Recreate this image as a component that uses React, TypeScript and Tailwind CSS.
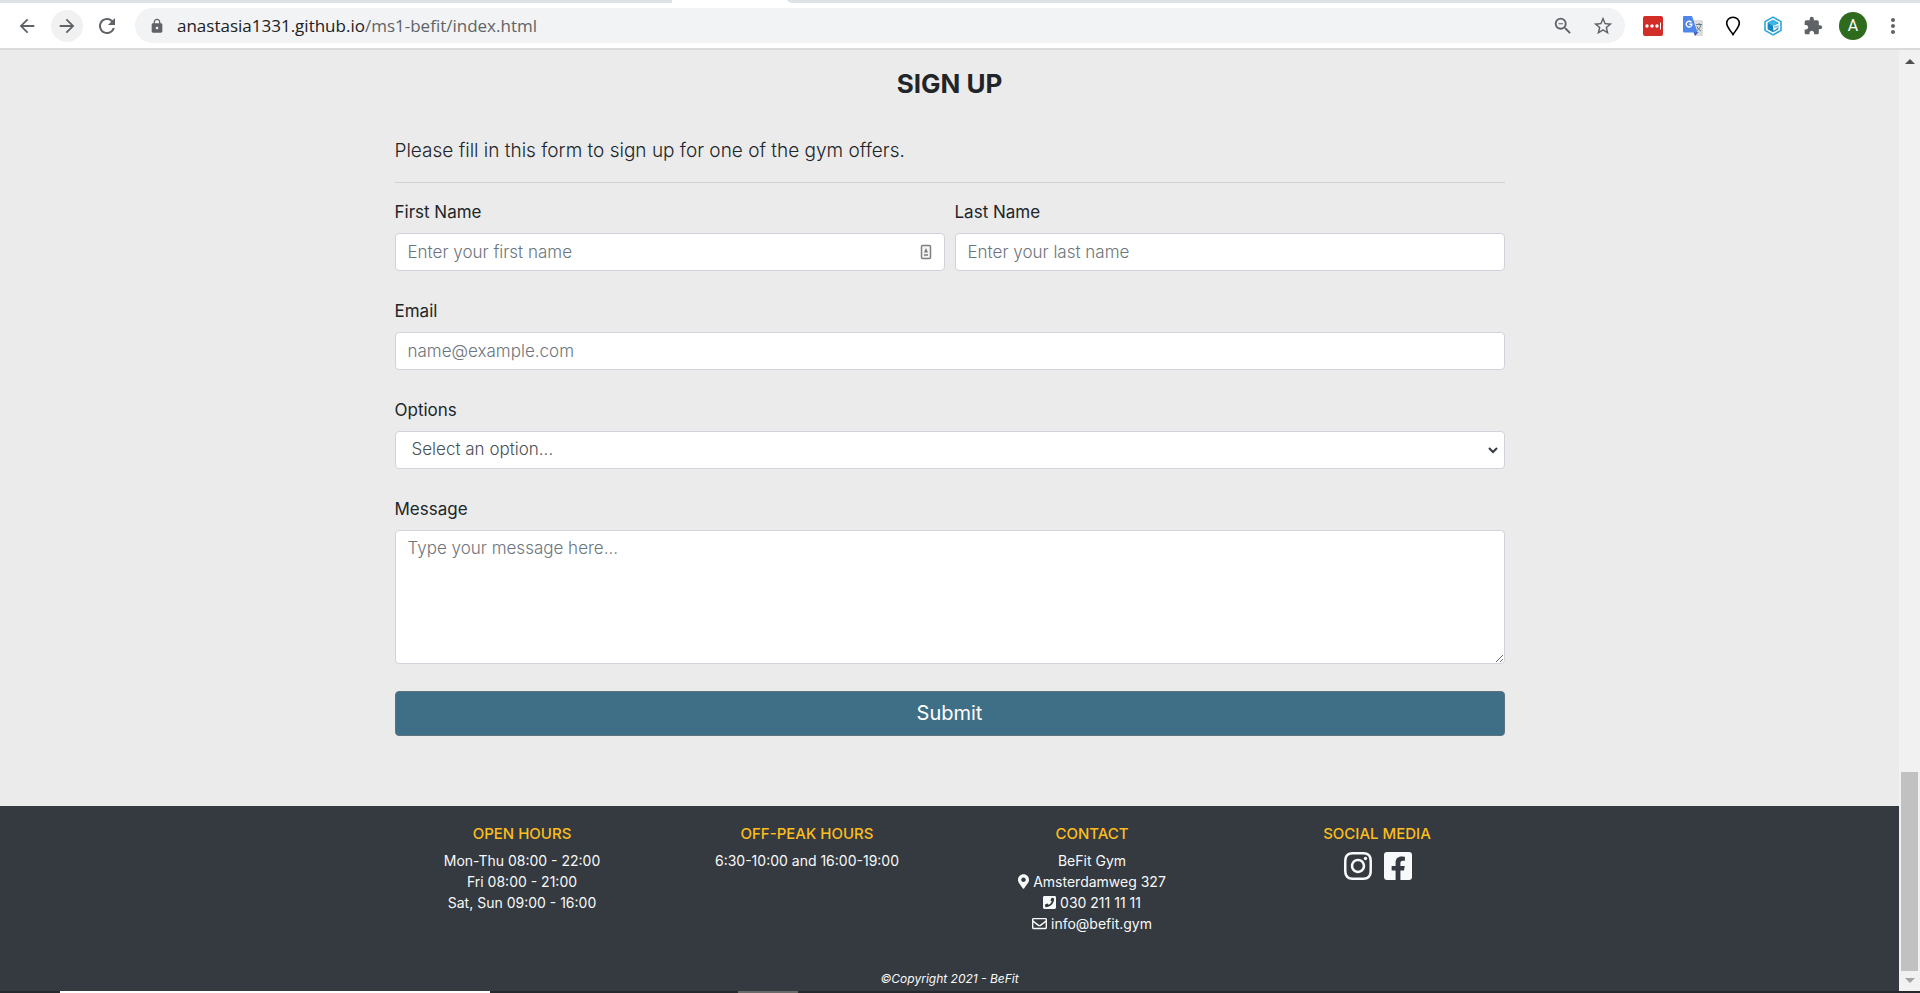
import type { ReactNode } from "react";
import {
  MdArrowBack,
  MdArrowForward,
  MdExtension,
  MdLock,
  MdMoreVert,
  MdRefresh,
  MdStarBorder,
  MdZoomOut,
} from "react-icons/md";
import {
  FaFacebookSquare,
  FaInstagram,
  FaMapMarkerAlt,
  FaPhoneSquare,
  FaRegEnvelope,
} from "react-icons/fa";

const control =
  "block h-[38px] w-full rounded border border-[#ced4da] bg-white px-3 text-[17px] font-light placeholder:text-[#6c757d] outline-none";

function TabStrip() {
  return (
    <div className="flex h-[3px] bg-[#dee1e6]">
      <div className="w-[35%]" />
      <svg className="h-[3px] w-[120px]" viewBox="0 0 120 3" aria-hidden="true">
        <path d="M-4 3 Q-1 3 0 0 H115 Q117 3 120 3 Z" fill="#fff" />
      </svg>
    </div>
  );
}

function PasswordIcon() {
  return (
    <svg className="size-5" viewBox="0 0 20 20" aria-hidden="true">
      <rect width="20" height="20" rx="2" fill="#d32d27" />
      <circle cx="4" cy="10" r="1.7" fill="#fff" />
      <circle cx="9" cy="10" r="1.7" fill="#fff" />
      <circle cx="14" cy="10" r="1.7" fill="#fff" />
      <rect x="17" y="6.5" width="1" height="7" fill="#fff" />
    </svg>
  );
}

function TranslateIcon() {
  return (
    <svg className="size-5" viewBox="0 0 20 20" aria-hidden="true">
      <path d="M8 4h11a1 1 0 0 1 1 1v14a1 1 0 0 1-1 1h-7z" fill="#dcdcdc" />
      <path d="M10.5 16h5L12 20z" fill="#3a57b5" />
      <path d="M1 0h8l5.500 16.500H1a1 1 0 0 1-1-1V1a1 1 0 0 1 1-1z" fill="#4f86ec" />
      <path d="M8.400 6.300a2.900 2.900 0 1 0 .6 2H6.300" fill="none" stroke="#fff" strokeWidth="1.400" />
      <path
        d="M13 8.500h6M16 7v1.500M18 8.500c-.5 3-2.500 5-4 6M14 10.500c.8 2 2.200 3.500 4 4.500"
        fill="none"
        stroke="#607d8b"
        strokeWidth="1"
      />
    </svg>
  );
}

function PinIcon() {
  return (
    <svg className="size-5" viewBox="0 0 20 20" aria-hidden="true">
      <path
        d="M10 1.200C6.200 1.200 3.700 4 3.700 7.200c0 3.600 3.700 7.300 6.300 11.300 2.600-4 6.300-7.700 6.300-11.300 0-3.200-2.500-6-6.300-6z"
        fill="none"
        stroke="#000"
        strokeWidth="1.600"
      />
    </svg>
  );
}

function HexagonIcon() {
  return (
    <svg className="size-5" viewBox="0 0 20 20" aria-hidden="true">
      <path d="M10 1.100l8 4.500v8.800l-8 4.500-8-4.500V5.600z" fill="#fff" stroke="#2ba3dc" strokeWidth="1.600" />
      <path d="M10 3.800l5.400 3v6.400l-5.400 3-5.400-3V6.800z" fill="#1287c4" />
      <path d="M10 3.800l5.400 3L10 10 4.600 6.800z" fill="#3fb4e8" />
      <path d="M15.800 8L10.500 10.200v0M15.600 10H10.600v2.200l3-.2-3.300 2.200" fill="none" stroke="#fff" strokeWidth="1.200" />
    </svg>
  );
}

function IconButton({ label, className = "", children }: { label: string; className?: string; children: ReactNode }) {
  return (
    <button
      type="button"
      aria-label={label}
      className={`flex size-8 shrink-0 items-center justify-center rounded-full text-[#5f6368] ${className}`}
    >
      {children}
    </button>
  );
}

function Toolbar() {
  return (
    <header className="border-b-2 border-[#d9dbdb] bg-white">
      <TabStrip />
      <div className="flex h-[45px] items-center pr-[11px] pl-[11px]">
        <div className="flex gap-2">
          <IconButton label="Back">
            <MdArrowBack size={22} />
          </IconButton>
          <IconButton label="Forward" className="bg-[#f1f1f1]">
            <MdArrowForward size={22} />
          </IconButton>
          <IconButton label="Reload">
            <MdRefresh size={24} />
          </IconButton>
        </div>
        <div className="ml-3 flex h-[35px] flex-1 items-center rounded-full bg-[#f1f3f4] pr-[6px] pl-[14px]">
          <MdLock className="text-[#5f6368]" size={16} />
          <p className="ml-3 flex-1 font-['Open_Sans',sans-serif] text-[17px] text-[#5f6368]">
            <span className="text-[#202124]">anastasia1331.github.io</span>/ms1-befit/index.html
          </p>
          <div className="flex gap-2">
            <IconButton label="Zoom">
              <MdZoomOut size={22} />
            </IconButton>
            <IconButton label="Bookmark this page">
              <MdStarBorder size={22} />
            </IconButton>
          </div>
        </div>
        <div className="ml-3 flex items-center gap-2">
          <IconButton label="Password manager">
            <PasswordIcon />
          </IconButton>
          <IconButton label="Translate">
            <TranslateIcon />
          </IconButton>
          <IconButton label="Location">
            <PinIcon />
          </IconButton>
          <IconButton label="Cube">
            <HexagonIcon />
          </IconButton>
          <IconButton label="Extensions">
            <MdExtension size={20} />
          </IconButton>
          <IconButton label="Profile">
            <span className="flex size-7 items-center justify-center rounded-full bg-[#2f6b1c] font-['Roboto',sans-serif] text-base text-white">
              A
            </span>
          </IconButton>
          <IconButton label="Menu">
            <MdMoreVert size={24} />
          </IconButton>
        </div>
      </div>
    </header>
  );
}

function Field({ id, label, children }: { id: string; label: string; children: ReactNode }) {
  return (
    <div className="flex-1">
      <label htmlFor={id} className="mb-[10px] block text-[17px] leading-[22px]">
        {label}
      </label>
      {children}
    </div>
  );
}

function SignUp() {
  return (
    <main className="flex-1 bg-[#ebebeb] pt-4 pb-[70px]">
      <div className="mx-auto max-w-[1140px] px-[15px]">
        <h2 className="text-center text-[26px] leading-9 font-bold">SIGN UP</h2>
        <form>
          <p className="mt-[34px] border-b border-[#d0d0d0] pb-4 text-[19px] leading-[30px] font-light">
            Please fill in this form to sign up for one of the gym offers.
          </p>
          <div className="mt-[18px] flex flex-col gap-[29px]">
            <div className="flex gap-[10px]">
              <Field id="first-name" label="First Name">
                <div className="relative">
                  <input id="first-name" type="text" placeholder="Enter your first name" className={control} />
                  <svg className="absolute top-[11px] right-[13px] h-4 w-3" viewBox="0 0 12 16" aria-hidden="true">
                    <rect x="1.500" y="1.500" width="9" height="13" rx="1" fill="#f5f5f5" stroke="#808080" strokeWidth="1.500" />
                    <path d="M6 4l2 4.500H4z" fill="#777" />
                    <path d="M4 10h4v2H4z" fill="#999" />
                  </svg>
                </div>
              </Field>
              <Field id="last-name" label="Last Name">
                <input id="last-name" type="text" placeholder="Enter your last name" className={control} />
              </Field>
            </div>
            <Field id="email" label="Email">
              <input id="email" type="email" placeholder="name@example.com" className={control} />
            </Field>
            <Field id="options" label="Options">
              <div className="relative">
                <select
                  id="options"
                  className="block h-[38px] w-full appearance-none rounded border border-[#ced4da] bg-white px-4 text-[17px] font-light text-[#495057] outline-none"
                >
                  <option>Select an option...</option>
                </select>
                <svg
                  className="pointer-events-none absolute top-4 right-[7px] h-[7px] w-[10px]"
                  viewBox="0 0 10 7"
                  aria-hidden="true"
                >
                  <path d="M1 1l4 4 4-4" fill="none" stroke="#343a40" strokeWidth="2" />
                </svg>
              </div>
            </Field>
            <Field id="message" label="Message">
              <textarea
                id="message"
                placeholder="Type your message here..."
                className="block h-[134px] w-full rounded border border-[#ced4da] bg-white px-3 py-[6px] text-[17px] leading-[22px] font-light outline-none placeholder:text-[#6c757d]"
              />
            </Field>
          </div>
          <button
            type="submit"
            className="mt-[27px] h-[45px] w-full rounded border border-[#5d7480] bg-[#3f6f86] pb-[2px] text-[20px] text-white"
          >
            Submit
          </button>
        </form>
      </div>
    </main>
  );
}

function FooterColumn({ title, children }: { title: string; children: ReactNode }) {
  return (
    <section className="text-center text-[14px] leading-[21px]">
      <h3 className="mb-1 text-[15px] leading-6 font-medium text-[#fcbe1e]">{title}</h3>
      {children}
    </section>
  );
}

function Footer() {
  return (
    <footer className="bg-[#343a40] pt-4 pb-1 text-[#f8f9fa]">
      <div className="mx-auto grid max-w-[1140px] grid-cols-4">
        <FooterColumn title="OPEN HOURS">
          <p>Mon-Thu 08:00 - 22:00</p>
          <p>Fri 08:00 - 21:00</p>
          <p>Sat, Sun 09:00 - 16:00</p>
        </FooterColumn>
        <FooterColumn title="OFF-PEAK HOURS">
          <p>6:30-10:00 and 16:00-19:00</p>
        </FooterColumn>
        <FooterColumn title="CONTACT">
          <p>BeFit Gym</p>
          <p className="flex items-center justify-center gap-1">
            <FaMapMarkerAlt className="w-[11px]" size={15} /> Amsterdamweg 327
          </p>
          <p className="flex items-center justify-center gap-1">
            <FaPhoneSquare className="w-[13px]" size={15} /> 030 211 11 11
          </p>
          <p className="flex items-center justify-center gap-1">
            <FaRegEnvelope size={15} /> info@befit.gym
          </p>
        </FooterColumn>
        <FooterColumn title="SOCIAL MEDIA">
          <div className="flex justify-center gap-2 pl-[2px]">
            <a href="#instagram" aria-label="Instagram">
              <FaInstagram size={32} />
            </a>
            <a href="#facebook" aria-label="Facebook">
              <FaFacebookSquare size={32} />
            </a>
          </div>
        </FooterColumn>
      </div>
      <p className="mt-9 text-center text-[12px] leading-[17px] italic">©Copyright 2021 - BeFit</p>
    </footer>
  );
}

function ScrollBar() {
  return (
    <div className="flex w-[21px] flex-col items-center bg-[#f1f1f1]" aria-hidden="true">
      <svg className="h-5 w-[10px]" viewBox="0 0 10 20">
        <path d="M0 14l5-5 5 5z" fill="#505050" />
      </svg>
      <div className="grow-[703]" />
      <div className="w-[17px] grow-[199] bg-[#c1c1c1]" />
      <svg className="h-5 w-[10px]" viewBox="0 0 10 20">
        <path d="M0 7l5 5 5-5z" fill="#a3a3a3" />
      </svg>
    </div>
  );
}

function TaskbarEdge() {
  return (
    <div className="flex h-[2px] bg-[#25282c]">
      <div className="w-[60px]" />
      <div className="w-[430px] bg-white" />
      <div className="w-[248px]" />
      <div className="w-[60px] bg-[#6a6a6a]" />
    </div>
  );
}

export default function App() {
  return (
    <div className="flex min-h-screen flex-col font-['Inter',sans-serif] text-base text-[#212529]">
      <Toolbar />
      <div className="flex flex-1">
        <div className="flex flex-1 flex-col">
          <SignUp />
          <Footer />
        </div>
        <ScrollBar />
      </div>
      <TaskbarEdge />
    </div>
  );
}
